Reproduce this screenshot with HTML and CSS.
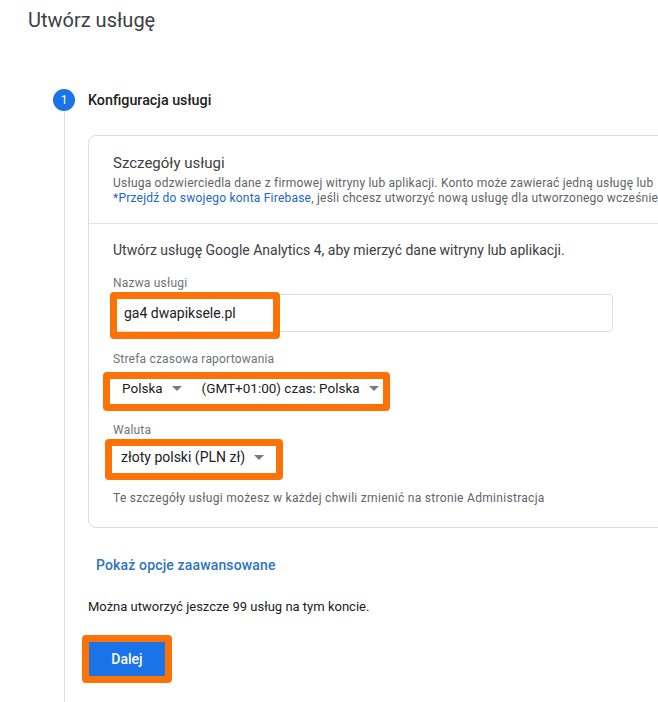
FILE: index.html
```html
<!DOCTYPE html>
<html lang="pl">
<head>
<meta charset="utf-8">
<title>Utwórz usługę</title>
<link rel="stylesheet" href="styles.css">
</head>
<body>
<h1 class="page-title">Utwórz usługę</h1>
<div class="stepper">
  <div class="step-head">
    <span class="step-num">1</span>
    <span class="step-label">Konfiguracja usługi</span>
  </div>
  <div class="step-body">
    <div class="card">
      <div class="card-head">
        <div class="card-title">Szczegóły usługi</div>
        <div class="card-desc">Usługa odzwierciedla dane z firmowej witryny lub aplikacji. Konto może zawierać jedną usługę lub</div>
        <div class="card-desc"><a class="link" href="#">*Przejdź do swojego konta Firebase</a>, jeśli chcesz utworzyć nową usługę dla utworzonego wcześniej</div>
      </div>
      <div class="card-body">
        <div class="intro">Utwórz usługę Google Analytics 4, aby mierzyć dane witryny lub aplikacji.</div>

        <div class="label label-first">Nazwa usługi</div>
        <div class="field">
          <div class="input">ga4 dwapiksele.pl</div>
          <span class="hl hl-name"></span>
        </div>

        <div class="label label-tz">Strefa czasowa raportowania</div>
        <div class="field">
          <div class="select-row select-tz">
            <span class="select">Polska <i class="arrow"></i></span>
            <span class="select select-zone">(GMT+01:00) czas: Polska <i class="arrow"></i></span>
          </div>
          <span class="hl hl-tz"></span>
        </div>

        <div class="label label-cur">Waluta</div>
        <div class="field">
          <div class="select-row select-cur">
            <span class="select">złoty polski (PLN zł) <i class="arrow"></i></span>
          </div>
          <span class="hl hl-cur"></span>
        </div>

        <div class="note">Te szczegóły usługi możesz w każdej chwili zmienić na stronie Administracja</div>
      </div>
    </div>

    <div class="adv"><span class="adv-btn">Pokaż opcje zaawansowane</span></div>
    <div class="remaining">Można utworzyć jeszcze 99 usług na tym koncie.</div>
    <div class="field field-btn">
      <span class="btn-primary">Dalej</span>
      <span class="hl hl-btn"></span>
    </div>
  </div>
</div>
</body>
</html>
```

FILE: styles.css
```css
html, body {
  margin: 0;
  padding: 0;
  overflow: hidden;
  background: #ffffff;
}

body {
  font-family: Roboto, "Liberation Sans", Arial, sans-serif;
  color: #202124;
  width: 658px;
  height: 702px;
}

.page-title {
  margin: 0;
  padding: 8px 0 0 28px;
  font-size: 20px;
  line-height: 24px;
  font-weight: 400;
  color: #3c4043;
}

.stepper {
  margin: 57px 0 0 53px;
}

.step-head {
  display: flex;
  align-items: center;
  gap: 13px;
  height: 22px;
}

.step-num {
  width: 22px;
  height: 22px;
  border-radius: 50%;
  background: #1a73e8;
  color: #ffffff;
  font-size: 12px;
  display: flex;
  align-items: center;
  justify-content: center;
}

.step-label {
  font-size: 14.3px;
  font-weight: 500;
  color: #202124;
}

.step-body {
  margin-left: 11px;
  border-left: 1px solid #dadce0;
  padding: 24px 0 40px 23px;
}

.card {
  width: 640px;
  border: 1px solid #dadce0;
  border-radius: 8px;
}

.card-head {
  padding: 17px 24px 17px 24px;
  border-bottom: 1px solid #e3e5e8;
}

.card-title {
  font-size: 15px;
  line-height: 20px;
  color: #3c4043;
  margin-bottom: 3px;
}

.card-desc {
  font-size: 12px;
  line-height: 15px;
  color: #5f6368;
  white-space: nowrap;
  letter-spacing: 0.22px;
}

.link {
  color: #1a66c9;
  text-decoration: none;
}

.card-body {
  padding: 16px 24px 21px 24px;
}

.intro {
  font-size: 14px;
  line-height: 20px;
  color: #3c4043;
}

.label {
  font-size: 12px;
  line-height: 14px;
  letter-spacing: 0.2px;
  color: #6f7378;
}

.label-first { margin-top: 16px; }
.label-tz { margin-top: 20px; }
.label-cur { margin-top: 17px; }

.field {
  position: relative;
}

.input {
  margin-top: 4px;
  width: 500px;
  height: 38px;
  box-sizing: border-box;
  border: 1px solid #dadce0;
  border-radius: 4px;
  padding: 0 0 0 10px;
  display: flex;
  align-items: center;
  font-size: 14px;
  color: #202124;
}

.select-row {
  display: flex;
  align-items: center;
  height: 36px;
  font-size: 14px;
  color: #202124;
}

.select-tz {
  margin-top: 4px;
  padding-left: 9px;
  gap: 20px;
  font-size: 13.5px;
}

.select-cur {
  margin-top: 2px;
  padding-left: 8px;
}

.select {
  display: inline-flex;
  align-items: center;
  gap: 9px;
}

.arrow {
  display: inline-block;
  width: 0;
  height: 0;
  border-left: 5px solid transparent;
  border-right: 5px solid transparent;
  border-top: 5px solid #7a7a7a;
}

.hl {
  position: absolute;
  box-sizing: border-box;
  border: 7px solid #fb7306;
  border-radius: 4px;
  pointer-events: none;
}

.hl-name {
  left: -3px;
  top: -2px;
  width: 170px;
  height: 47px;
}

.hl-tz {
  left: -10px;
  top: 2px;
  width: 287px;
  height: 39px;
}

.hl-cur {
  left: -8px;
  top: 0;
  width: 178px;
  height: 41px;
}

.note {
  margin-top: 15px;
  font-size: 12px;
  line-height: 16px;
  color: #5f6368;
  letter-spacing: 0.3px;
}

.adv {
  margin-top: 19px;
  height: 36px;
  display: flex;
  align-items: center;
}

.adv-btn {
  padding: 0 8px;
  font-size: 14px;
  font-weight: 500;
  letter-spacing: 0.15px;
  color: #2f74c0;
}

.remaining {
  margin-top: 15px;
  font-size: 13px;
  line-height: 18px;
  color: #202124;
}

.field-btn {
  margin-top: 25px;
  width: 78px;
}

.btn-primary {
  display: flex;
  align-items: center;
  justify-content: center;
  width: 78px;
  height: 36px;
  background: #1a73e8;
  color: #ffffff;
  font-size: 14px;
  font-weight: 500;
  border-radius: 4px;
}

.hl-btn {
  left: -6px;
  top: -6px;
  width: 90px;
  height: 48px;
}
```
